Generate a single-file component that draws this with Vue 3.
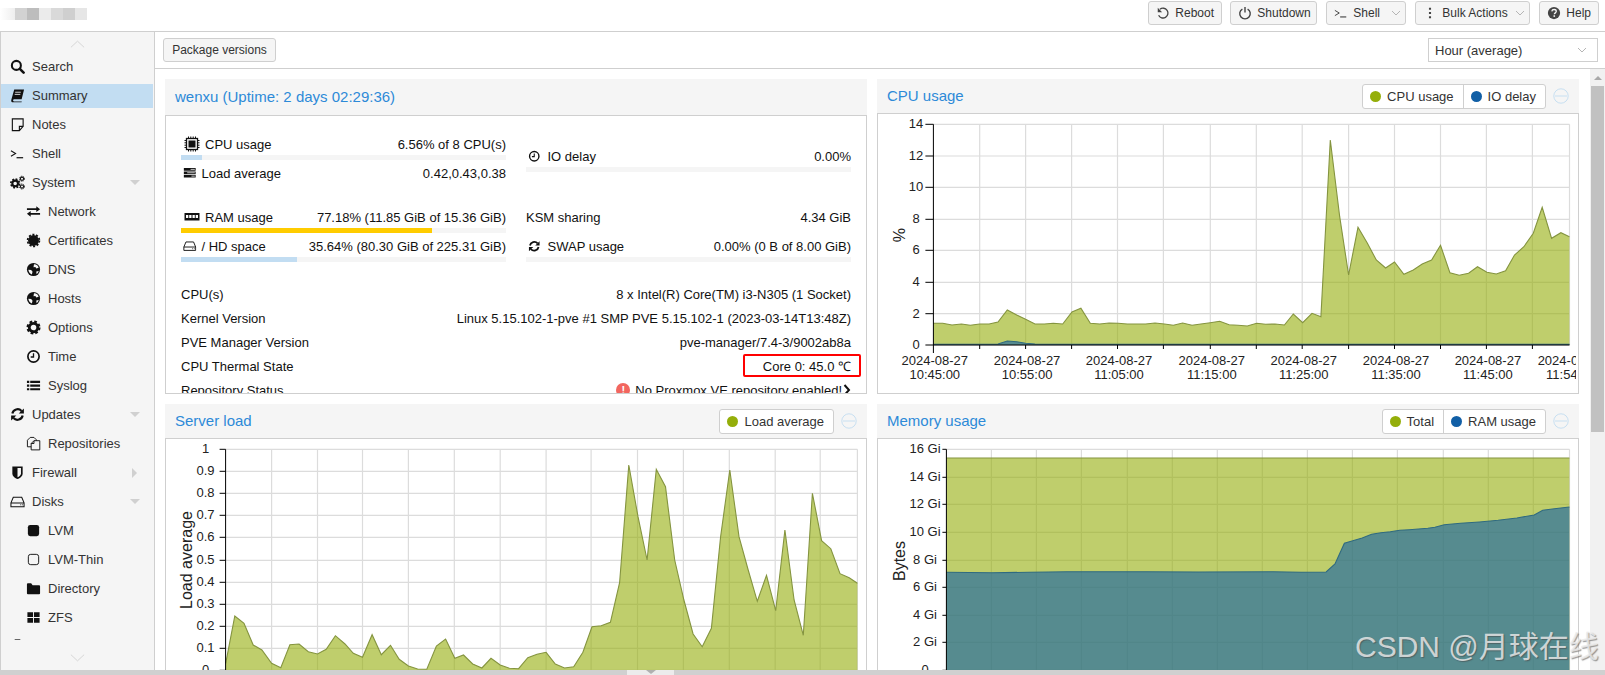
<script setup>
const toPts = (raw, ox, oy, fx, fy) => {
  const out = []
  for (let i = 0; i < raw.length; i += 2) out.push([+(ox + raw[i] / fx).toFixed(1), +(oy + raw[i + 1] / fy).toFixed(1)])
  return out
}
const cpuRaw = [135,640,155,640,175,645,195,642,214,646,234,642,254,642,273,636,293,600,313,615,332,628,352,642,372,642,391,640,411,642,431,606,450,595,470,640,490,642,510,639,529,640,549,642,569,642,588,642,608,639,628,642,647,646,667,639,687,646,706,642,726,638,746,634,766,644,785,646,805,648,825,640,844,643,864,642,884,645,903,612,923,638,943,610,962,620,982,90,1002,320,1021,495,1041,352,1061,400,1080,450,1100,474,1119,456,1139,493,1159,480,1178,462,1198,450,1217,406,1237,488,1257,496,1277,490,1296,470,1316,487,1336,492,1356,482,1375,435,1395,410,1415,370,1434,292,1454,385,1474,368,1492,380]
const ioRaw = [135,703,273,702,293,693,313,695,332,700,352,702,372,703,1492,703]
const loadRaw = [143,790,163,648,183,670,203,735,222,750,243,790,263,803,283,734,303,732,323,755,343,762,362,748,382,707,403,732,421,760,441,772,462,704,482,764,502,736,521,778,541,798,561,807,581,808,602,738,622,717,642,775,661,765,681,792,701,804,721,775,741,795,761,805,781,806,801,773,821,763,841,757,861,792,881,804,901,800,921,757,941,680,961,677,981,667,1001,548,1021,195,1041,350,1061,480,1081,208,1101,260,1121,480,1141,600,1161,702,1181,740,1201,685,1221,410,1241,210,1261,410,1281,510,1301,604,1321,526,1341,632,1361,390,1381,600,1401,706,1421,280,1441,422,1461,446,1481,521,1501,533,1519,550]
const totalRaw = [163,174,1492,174]
const ramRaw = [163,517,260,518,340,517,420,515,590,515,700,516,860,515,920,517,973,516,992,492,1012,430,1030,422,1050,414,1070,403,1090,398,1110,395,1130,391,1150,389,1170,387,1190,385,1205,382,1225,374,1260,370,1300,366,1340,361,1380,354,1417,345,1435,331,1460,326,1492,321]

const line = (pts) => pts.map((p) => p.join(',')).join(' ')
const area = (pts, base) => `${pts[0][0]},${base} ${line(pts)} ${pts[pts.length - 1][0]},${base}`

const fx = 2.1333
const green = '#94ae0a'
const blue = '#115fa6'

const cpuX = [234,332,430,528,626,726,824,922,1021,1119,1217,1315,1413].map((v) => +(870 + v / fx - 878).toFixed(1))
const cpuLabels = [
  [135, '10:45:00'], [332, '10:55:00'], [528, '11:05:00'], [726, '11:15:00'],
  [922, '11:25:00'], [1119, '11:35:00'], [1315, '11:45:00'], [1492, '11:54:00']
].map(([x, t]) => ({ x: +(870 + x / fx - 878 + 1.5).toFixed(1), t }))

const charts = [
  {
    title: 'CPU usage', legend: [['CPU usage', green], ['IO delay', blue]], axis: 'Cpu',
    left: 55.4, right: 691.5, top: 10.3, base: 231, labelX: 38, tickLen: 8,
    yLabel: '%', yLabelX: 27, yLabelY: 121,
    ticks: [['14', 43], ['12', 138], ['10', 232], ['8', 328], ['6', 421], ['4', 517], ['2', 611], ['0', 705]].map(([t, y]) => ({ t, y: +(110 + y / 3 - 114).toFixed(1) })),
    xs: cpuX, xLabels: cpuLabels,
    series: [
      { c: green, pts: toPts(cpuRaw, 870 - 878, 110 - 114, fx, 3) },
      { c: blue, pts: toPts(ioRaw, 870 - 878, 110 - 114, fx, 3) }
    ]
  },
  {
    title: 'Server load', legend: [['Load average', green]], axis: 'Load',
    left: 59.6, right: 691.4, top: 10.3, base: 231, labelX: 39.5, tickLen: 6,
    yLabel: 'Load average', yLabelX: 26, yLabelY: 121,
    ticks: [['1', 148], ['0.9', 214], ['0.8', 280], ['0.7', 346], ['0.6', 412], ['0.5', 481], ['0.4', 547], ['0.3', 613], ['0.2', 679], ['0.1', 745], ['0', 811]].map(([t, y]) => ({ t, y: +(400 + y / 3 - 439).toFixed(1) })),
    xs: [243,343,441,541,641,741,841,939,1040,1140,1240,1340,1438].map((v) => +(160 + v / 2.178 - 166).toFixed(1)),
    xLabels: [],
    series: [{ c: green, pts: toPts(loadRaw, 160 - 166, 400 - 439, 2.178, 3) }]
  },
  {
    title: 'Memory usage', legend: [['Total', green], ['RAM usage', blue]], axis: 'Mem',
    left: 68.4, right: 691.5, top: 10.3, base: 231, labelX: 47, tickLen: 4,
    yLabel: 'Bytes', yLabelX: 27, yLabelY: 122,
    ticks: [['16 Gi', 148], ['14 Gi', 232], ['12 Gi', 313], ['10 Gi', 397], ['8 Gi', 481], ['6 Gi', 562], ['4 Gi', 646], ['2 Gi', 727], ['0', 811]].map(([t, y]) => ({ t, y: +(400 + y / 3 - 439).toFixed(1) })),
    xs: [259,355,451,549,645,741,837,933,1029,1125,1223,1319,1415].map((v) => +(870 + v / fx - 878).toFixed(1)),
    xLabels: [],
    series: [
      { c: green, pts: toPts(totalRaw, 870 - 878, 400 - 439, fx, 3) },
      { c: blue, pts: toPts(ramRaw, 870 - 878, 400 - 439, fx, 3) }
    ]
  }
].map((c) => ({
  ...c,
  series: c.series.map((s) => ({ ...s, line: line(s.pts), area: area(s.pts, c.axis === 'Cpu' ? c.base : 240) }))
}))

const nav = [
  ['i-search', 'Search', 0], ['i-book', 'Summary', 0, 'active'], ['i-note', 'Notes', 0], ['i-shell', 'Shell', 0],
  ['i-cogs', 'System', 0, 'down'], ['i-exchange', 'Network', 1], ['i-cert', 'Certificates', 1], ['i-globe', 'DNS', 1],
  ['i-globe', 'Hosts', 1], ['i-gear', 'Options', 1], ['i-clock', 'Time', 1], ['i-list', 'Syslog', 1],
  ['i-refresh', 'Updates', 0, 'down'], ['i-files', 'Repositories', 1], ['i-shield', 'Firewall', 0, 'right'],
  ['i-hdd', 'Disks', 0, 'down'], ['i-solid', 'LVM', 1], ['i-outline', 'LVM-Thin', 1], ['i-folder', 'Directory', 1],
  ['i-th', 'ZFS', 1], ['i-ceph', 'Ceph', 0]
].map(([icon, label, child, flag]) => ({ icon, label, child, active: flag === 'active', caret: flag === 'down' || flag === 'right' ? flag : '' }))

const info = [
  ['CPU(s)', '8 x Intel(R) Core(TM) i3-N305 (1 Socket)'],
  ['Kernel Version', 'Linux 5.15.102-1-pve #1 SMP PVE 5.15.102-1 (2023-03-14T13:48Z)'],
  ['PVE Manager Version', 'pve-manager/7.4-3/9002ab8a']
]
const fillWidth = (p) => ({ width: p + '%' })
</script>

<template>
  <div class="app">
    <svg class="defs" aria-hidden="true">
      <symbol id="i-search" viewBox="0 0 16 16"><circle cx="6.8" cy="6.8" r="4.8" fill="none" stroke="currentColor" stroke-width="2.2"/><path d="M10.5 10.5l4 4" stroke="currentColor" stroke-width="2.8" stroke-linecap="round"/></symbol>
      <symbol id="i-book" viewBox="0 0 16 16"><path d="M4.5 1.5H15l-2.6 10.6H4a1.3 1.3 0 0 0 0 2.2h8.6l-.3 1H3.2C1.6 15.3 1 14 1.4 12.4z" fill="currentColor"/><path d="M5.5 4.5h6M5 6.8h6" stroke="#f5f5f5" stroke-width=".9"/></symbol>
      <symbol id="i-note" viewBox="0 0 16 16"><path d="M2.5 2H14v8l-4 4.5H2.5z" fill="none" stroke="currentColor" stroke-width="1.2"/><path d="M10 14.5V10h4" fill="none" stroke="currentColor" stroke-width="1.2"/></symbol>
      <symbol id="i-shell" viewBox="0 0 16 16"><path d="M1 5l5 3-5 3" fill="none" stroke="currentColor" stroke-width="1.1"/><path d="M7 12.5h7" stroke="currentColor" stroke-width="1.3"/></symbol>
      <symbol id="i-gear" viewBox="0 0 16 16"><circle cx="8" cy="8" r="4.5" fill="none" stroke="currentColor" stroke-width="3"/><circle cx="8" cy="8" r="6.3" fill="none" stroke="currentColor" stroke-width="2.4" stroke-dasharray="2.8 2.15"/></symbol>
      <symbol id="i-cogs" viewBox="0 0 16 16"><circle cx="5.5" cy="9" r="3" fill="none" stroke="currentColor" stroke-width="2.2"/><circle cx="5.5" cy="9" r="4.6" fill="none" stroke="currentColor" stroke-width="1.8" stroke-dasharray="2 1.6"/><circle cx="12.8" cy="4" r="1.7" fill="none" stroke="currentColor" stroke-width="1.2"/><circle cx="12.8" cy="4" r="2.7" fill="none" stroke="currentColor" stroke-width="1" stroke-dasharray="1.2 1"/><circle cx="12.8" cy="12.3" r="1.7" fill="none" stroke="currentColor" stroke-width="1.2"/><circle cx="12.8" cy="12.3" r="2.7" fill="none" stroke="currentColor" stroke-width="1" stroke-dasharray="1.2 1"/></symbol>
      <symbol id="i-exchange" viewBox="0 0 16 16"><path d="M1 4.5h10v-2l4 3-4 3v-2H1zM15 9.5H5v-2l-4 3 4 3v-2h10z" fill="currentColor"/></symbol>
      <symbol id="i-cert" viewBox="0 0 16 16"><circle cx="8" cy="8" r="5.8" fill="currentColor"/><circle cx="8" cy="8" r="6.3" fill="none" stroke="currentColor" stroke-width="1.8" stroke-dasharray="2.2 1.76"/></symbol>
      <symbol id="i-globe" viewBox="0 0 16 16"><circle cx="8" cy="8" r="7" fill="currentColor"/><path d="M8.5 2.500c2.500-.3 4.500 1.500 5 3.500l-2.500.8-1-1.500-2 .3zM2.500 8.200l3 .2 1.500 2-.8 3c-1.800-.8-3.500-3-3.700-5.200zM11 10l2.500-.5c-.3 1.300-1 2.500-2.300 3.300z" fill="#f5f5f5"/></symbol>
      <symbol id="i-clock" viewBox="0 0 16 16"><circle cx="8" cy="8" r="6" fill="none" stroke="currentColor" stroke-width="1.8"/><path d="M8 4.500V8.500H5" fill="none" stroke="currentColor" stroke-width="1.4"/></symbol>
      <symbol id="i-list" viewBox="0 0 16 16"><path d="M1 3h2.500v2.300H1zM1 6.900h2.500v2.300H1zM1 10.800h2.500v2.300H1zM4.500 3H15v2.300H4.500zM4.500 6.900H15v2.300H4.500zM4.500 10.800H15v2.300H4.500z" fill="currentColor"/></symbol>
      <symbol id="i-refresh" viewBox="0 0 16 16"><path d="M2.500 7A5.700 5.700 0 0 1 12.300 4.200" fill="none" stroke="currentColor" stroke-width="2.3"/><path d="M14.800 1.500V7H9.300z" fill="currentColor"/><path d="M13.500 9A5.700 5.700 0 0 1 3.700 11.800" fill="none" stroke="currentColor" stroke-width="2.3"/><path d="M1.200 14.500V9h5.500z" fill="currentColor"/></symbol>
      <symbol id="i-files" viewBox="0 0 16 16"><path d="M4.500 1.500h4L11 4v1M4.500 1.500l-3 3v7h4" fill="none" stroke="currentColor" stroke-width="1"/><path d="M8.500 5h6.200v9.800H5.500V8z" fill="none" stroke="currentColor" stroke-width="1"/><path d="M8.500 5v3h-3" fill="none" stroke="currentColor" stroke-width="1"/></symbol>
      <symbol id="i-shield" viewBox="0 0 16 16"><path d="M2.500 1.500h11V9c0 3-3 5-5.500 6-2.500-1-5.500-3-5.500-6z" fill="currentColor"/><path d="M8 3.300h3.700V9c0 1.800-2 3.300-3.700 4.100z" fill="#f5f5f5"/></symbol>
      <symbol id="i-hdd" viewBox="0 0 16 16"><path d="M1 9.500l2.500-6h9l2.500 6v4H1zM1 9.500h14" fill="none" stroke="currentColor" stroke-width="1.1"/><path d="M11 11.500h1M13 11.500h.8" stroke="currentColor" stroke-width="1"/></symbol>
      <symbol id="i-solid" viewBox="0 0 16 16"><rect x="2" y="2" width="12" height="12" rx="2.500" fill="currentColor"/></symbol>
      <symbol id="i-outline" viewBox="0 0 16 16"><rect x="2.500" y="2.500" width="11" height="11" rx="2.500" fill="none" stroke="currentColor" stroke-width="1"/></symbol>
      <symbol id="i-folder" viewBox="0 0 16 16"><path d="M1 3.500a1 1 0 0 1 1-1h3.500L7 4.500h7a1 1 0 0 1 1 1V13a1 1 0 0 1-1 1H2a1 1 0 0 1-1-1z" fill="currentColor"/></symbol>
      <symbol id="i-th" viewBox="0 0 16 16"><path d="M1.500 2.500h6v5h-6zM8.500 2.500h6v5h-6zM1.500 8.500h6v5h-6zM8.500 8.500h6v5h-6z" fill="currentColor"/></symbol>
      <symbol id="i-ceph" viewBox="0 0 16 16"><path d="M5 1h6" stroke="currentColor" stroke-width="1.2"/></symbol>
      <symbol id="i-cpu" viewBox="0 0 16 16"><rect x="2.500" y="2.500" width="11" height="11" fill="#fff" stroke="currentColor" stroke-width="1.3"/><rect x="4.500" y="4.500" width="7" height="7" fill="currentColor"/><path d="M4.500 .5v2M6.800 .5v2M9.200 .5v2M11.500 .5v2M4.500 13.500v2M6.800 13.500v2M9.200 13.500v2M11.500 13.500v2M.5 4.500h2M.5 6.800h2M.5 9.200h2M.5 11.500h2M13.500 4.500h2M13.500 6.800h2M13.500 9.200h2M13.500 11.500h2" stroke="currentColor" stroke-width="1"/></symbol>
      <symbol id="i-load" viewBox="0 0 16 16"><path d="M1 2.500h14v3H1zM1 6.500h14v3H1zM1 10.500h14v3H1z" fill="currentColor"/><path d="M9 4h5M5 8h9M10 12h4" stroke="#fff" stroke-width=".9"/></symbol>
      <symbol id="i-ram" viewBox="0 0 16 16"><path d="M.5 4h15v7.500H.5z" fill="currentColor"/><path d="M2 6h2.300v3H2zM5.200 6h2.300v3H5.200zM8.500 6h2.300v3H8.500zM11.700 6H14v3h-2.300z" fill="#fff"/></symbol>
      <symbol id="i-undo" viewBox="0 0 16 16"><path d="M4.500 3.800A5.600 5.600 0 1 1 3 10.500" fill="none" stroke="currentColor" stroke-width="1.5"/><path d="M2 2v5h5z" fill="currentColor"/></symbol>
      <symbol id="i-power" viewBox="0 0 16 16"><path d="M5 3.500a6 6 0 1 0 6 0" fill="none" stroke="currentColor" stroke-width="1.6"/><path d="M8 1v6.500" stroke="currentColor" stroke-width="1.6"/></symbol>
      <symbol id="i-dots" viewBox="0 0 16 16"><path d="M6.800 2h2.400v2.400H6.800zM6.800 6.800h2.400v2.400H6.800zM6.800 11.600h2.400V14H6.800z" fill="currentColor"/></symbol>
      <symbol id="i-help" viewBox="0 0 16 16"><circle cx="8" cy="8" r="7" fill="currentColor"/><path d="M5.500 6.200C5.700 4.700 6.800 4 8.100 4c1.400 0 2.500.9 2.500 2.100 0 1.700-2.200 1.800-2.200 3.400" fill="none" stroke="#f5f5f5" stroke-width="1.5"/><path d="M7.400 10.600h1.800v1.800H7.400z" fill="#f5f5f5"/></symbol>
    </svg>

    <header class="top">
      <div class="logo"><i class="b0"></i><i class="b1"></i><i class="b2"></i><i class="b3"></i><i class="b4"></i><i class="b5"></i><i class="b6"></i></div>
      <div class="top-actions">
        <button class="btn btn-reboot"><svg class="ic"><use href="#i-undo"/></svg>Reboot</button>
        <button class="btn btn-shut"><svg class="ic"><use href="#i-power"/></svg>Shutdown</button>
        <button class="btn btn-shell"><svg class="ic"><use href="#i-shell"/></svg>Shell<span class="split"></span><svg class="chev" viewBox="0 0 10 6"><path d="M1 1l4 4 4-4"/></svg></button>
        <button class="btn btn-bulk"><svg class="ic"><use href="#i-dots"/></svg>Bulk Actions<svg class="chev" viewBox="0 0 10 6"><path d="M1 1l4 4 4-4"/></svg></button>
        <button class="btn"><svg class="ic"><use href="#i-help"/></svg>Help</button>
      </div>
    </header>

    <div class="middle">
      <aside class="side">
        <div class="scroll-up"><svg viewBox="0 0 16 8"><path d="M1 7.500L8 1l7 6.500"/></svg></div>
        <nav class="nav">
          <div v-for="n in nav" :key="n.label" class="nav-row" :class="{ active: n.active, child: n.child }">
            <svg class="nav-ic"><use :href="'#' + n.icon"/></svg>
            <span>{{ n.label }}</span>
            <i v-if="n.caret" class="caret" :class="n.caret"></i>
          </div>
        </nav>
        <div class="scroll-down"><svg viewBox="0 0 16 8"><path d="M1 .5L8 7l7-6.500"/></svg></div>
      </aside>

      <main class="main">
        <div class="toolbar">
          <button class="btn btn-pkg">Package versions</button>
          <div class="select"><span>Hour (average)</span><svg class="chev" viewBox="0 0 10 6"><path d="M1 1l4 4 4-4"/></svg></div>
        </div>
        <div class="content">
          <div class="grid">
            <section class="panel">
              <div class="phead phead-tall"><h2>wenxu (Uptime: 2 days 02:29:36)</h2></div>
              <div class="pbody summary">
                <div class="cols">
                  <div class="col">
                    <div class="stat"><div class="stat-line"><span class="lab"><svg class="sic"><use href="#i-cpu"/></svg>CPU usage</span><span>6.56% of 8 CPU(s)</span></div><div class="bar"><div class="fill" :style="fillWidth(6.56)"></div></div></div>
                    <div class="stat"><div class="stat-line"><span class="lab small"><svg class="sic"><use href="#i-load"/></svg>Load average</span><span>0.42,0.43,0.38</span></div></div>
                    <div class="stat gap15"><div class="stat-line"><span class="lab"><svg class="sic"><use href="#i-ram"/></svg>RAM usage</span><span>77.18% (11.85 GiB of 15.36 GiB)</span></div><div class="bar"><div class="fill warn" :style="fillWidth(77.18)"></div></div></div>
                    <div class="stat"><div class="stat-line"><span class="lab small"><svg class="sic"><use href="#i-hdd"/></svg>/ HD space</span><span>35.64% (80.30 GiB of 225.31 GiB)</span></div><div class="bar"><div class="fill" :style="fillWidth(35.64)"></div></div></div>
                  </div>
                  <div class="col col-r">
                    <div class="stat"><div class="stat-line"><span class="lab mini"><svg class="sic"><use href="#i-clock"/></svg>IO delay</span><span>0.00%</span></div><div class="bar"></div></div>
                    <div class="stat gap32"><div class="stat-line"><span>KSM sharing</span><span>4.34 GiB</span></div></div>
                    <div class="stat"><div class="stat-line"><span class="lab mini"><svg class="sic"><use href="#i-refresh"/></svg>SWAP usage</span><span>0.00% (0 B of 8.00 GiB)</span></div><div class="bar"></div></div>
                  </div>
                </div>
                <div class="info">
                  <div v-for="r in info" :key="r[0]" class="info-row"><span>{{ r[0] }}</span><span>{{ r[1] }}</span></div>
                  <div class="info-row thermal"><span>CPU Thermal State</span><span>Core 0: 45.0 ℃</span><i class="mark"></i></div>
                  <div class="info-row"><span>Repository Status</span><span class="repo"><i class="err">!</i>No Proxmox VE repository enabled!<svg class="more" viewBox="0 0 8 12"><path d="M1.500 1l4.500 5-4.500 5"/></svg></span></div>
                </div>
              </div>
            </section>

            <section v-for="c in charts" :key="c.title" class="panel">
              <div class="phead">
                <h2>{{ c.title }}</h2>
                <div class="legend"><div v-for="l in c.legend" :key="l[0]" class="leg"><i :style="{ background: l[1] }"></i>{{ l[0] }}</div></div>
                <div class="tool"><svg viewBox="0 0 16 16"><circle cx="8" cy="8" r="7.2"/><path d="M2 8h12"/></svg></div>
              </div>
              <div class="pbody">
                <svg class="chart" width="698" height="300">
                  <g class="grid-lines">
                    <line v-for="t in c.ticks" :key="'h' + t.t" :x1="c.left" :x2="c.right" :y1="t.y" :y2="t.y"/>
                    <line v-for="x in c.xs" :key="'v' + x" :x1="x" :x2="x" :y1="c.top" :y2="c.base"/>
                    <line :x1="c.right" :x2="c.right" :y1="c.top" :y2="c.base"/>
                  </g>
                  <g v-for="s in c.series" :key="s.c">
                    <polygon :points="s.area" :fill="s.c" fill-opacity=".6"/>
                    <polyline :points="s.line" fill="none" :stroke="s.c === '#94ae0a' ? '#84943f' : '#2f6a80'" stroke-width="1.1"/>
                  </g>
                  <g class="axis">
                    <line :x1="c.left" :x2="c.left" :y1="c.top" :y2="c.base + 8"/>
                    <line v-for="t in c.ticks" :key="'t' + t.t" :x1="c.left - c.tickLen" :x2="c.left" :y1="t.y" :y2="t.y"/>
                    <template v-if="c.xLabels.length">
                      <line :x1="c.left" :x2="c.right" :y1="c.base" :y2="c.base"/>
                      <line v-for="x in c.xs" :key="'x' + x" :x1="x" :x2="x" :y1="c.base" :y2="c.base + 4"/>
                    </template>
                  </g>
                  <text v-for="t in c.ticks" :key="'l' + t.t" class="tk" :x="c.labelX" :y="t.y + 4" text-anchor="middle">{{ t.t }}</text>
                  <text class="yt" :x="c.yLabelX" :y="c.yLabelY" text-anchor="middle" :transform="`rotate(-90 ${c.yLabelX} ${c.yLabelY})`">{{ c.yLabel }}</text>
                  <g v-for="l in c.xLabels" :key="l.t">
                    <text class="tk" :x="l.x" :y="251" text-anchor="middle">2024-08-27</text>
                    <text class="tk" :x="l.x" :y="265" text-anchor="middle">{{ l.t }}</text>
                  </g>
                </svg>
              </div>
            </section>
          </div>
          <div class="sbar">
            <div class="sbar-up"><i></i></div>
            <div class="thumb"></div>
          </div>
        </div>
      </main>
    </div>

    <div class="bottom"><div class="handle"><i></i></div></div>
    <div class="watermark">CSDN @月球在线</div>
  </div>
</template>

<style>
html, body { margin: 0; background: #fff; overflow: hidden; }
</style>

<style scoped>
.app { position: relative; width: 1605px; height: 675px; overflow: hidden; display: flex; flex-direction: column; font-family: "Liberation Sans", Arial, sans-serif; font-size: 13px; color: #222; background: #fff; }
.defs { display: block; width: 0; height: 0; }
.top { flex: 0 0 32px; box-sizing: border-box; border-bottom: 1px solid #cfcfcf; display: flex; justify-content: space-between; align-items: flex-start; }
.logo { display: flex; margin-top: 8px; height: 12px; }
.logo i { display: block; height: 12px; width: 12px; }
.logo .b0 { width: 15px; background: linear-gradient(90deg, #fff, #eee); }
.logo .b1 { background: #d2d2d2; } .logo .b2 { background: #bdbdbd; } .logo .b3 { background: #ebebeb; } .logo .b4 { background: #d9d9d9; } .logo .b5 { background: #cfcfcf; } .logo .b6 { background: #e6e6e6; }
.top-actions { display: flex; gap: 9px; padding: 1px 6px 0 0; }
.btn { box-sizing: border-box; height: 24px; padding: 0 7px; display: flex; align-items: center; gap: 5px; background: #f5f5f5; border: 1px solid #cfcfcf; border-radius: 3px; font: 12px "Liberation Sans", Arial, sans-serif; color: #333; white-space: nowrap; }
.ic { width: 14px; height: 14px; flex: none; color: #444; }
.chev { width: 10px; height: 6px; flex: none; }
.chev path { fill: none; stroke: #b5b5b5; stroke-width: 1; }
.btn-reboot { width: 74px; margin-right: -1px; }
.btn-shut { width: 87px; }
.btn-shell { width: 80px; }
.split { width: 1px; height: 16px; background: #ccc; margin-left: 1px; }
.btn-bulk { width: 115px; }
.btn-bulk .chev { margin-left: 2px; }
.btn-pkg { width: 113px; justify-content: center; }

.middle { flex: 0 0 638px; display: flex; overflow: hidden; }
.side { flex: 0 0 155px; box-sizing: border-box; border-left: 1px solid #cfcfcf; border-right: 1px solid #cfcfcf; background: #f5f5f5; display: flex; flex-direction: column; }
.scroll-up { flex: 0 0 20px; display: flex; justify-content: center; align-items: flex-start; padding-top: 8px; box-sizing: border-box; }
.scroll-up svg, .scroll-down svg { width: 15px; height: 8px; }
.scroll-up path, .scroll-down path { fill: none; stroke: #d4d4d4; stroke-width: 1; }
.nav { flex: 0 0 588px; overflow: hidden; display: flex; flex-direction: column; }
.nav-row { position: relative; flex: none; box-sizing: border-box; height: 24px; margin: 3px 1px 2px 0; padding: 0 0 2px 9px; display: flex; align-items: center; color: #333; font-size: 13px; }
.nav-row.child { padding-left: 25px; }
.nav-row.active { background: #c2ddf2; }
.nav-ic { width: 15px; height: 15px; margin-right: 7px; color: #111; flex: none; }
.caret { position: absolute; left: 129px; top: 9px; width: 0; height: 0; }
.caret.down { border-left: 5px solid transparent; border-right: 5px solid transparent; border-top: 5px solid #d0d0d0; }
.caret.right { left: 131px; top: 7px; border-top: 5px solid transparent; border-bottom: 5px solid transparent; border-left: 5px solid #d0d0d0; }
.scroll-down { flex: 0 0 30px; display: flex; justify-content: center; align-items: flex-start; padding-top: 14px; box-sizing: border-box; }

.main { flex: 1; min-width: 0; display: flex; flex-direction: column; }
.toolbar { flex: 0 0 37px; box-sizing: border-box; border-bottom: 1px solid #cfcfcf; padding: 6px 7px 0 8px; display: flex; justify-content: space-between; align-items: flex-start; }
.select { box-sizing: border-box; width: 170px; height: 24px; border: 1px solid #cfcfcf; padding: 0 10px 0 6px; display: flex; justify-content: space-between; align-items: center; font-size: 13px; color: #333; }
.content { flex: 1; min-height: 0; display: flex; overflow: hidden; }
.grid { flex: 1; min-width: 0; display: grid; grid-template-columns: 702px 702px; column-gap: 10px; row-gap: 10px; grid-auto-rows: 315px; padding: 10px 0 0 10px; box-sizing: border-box; }
.panel { display: flex; flex-direction: column; min-height: 0; }
.phead { flex: 0 0 34px; background: #f5f5f5; display: flex; align-items: center; padding: 0 10px; box-sizing: border-box; }
.phead-tall { flex-basis: 36px; }
.phead h2 { margin: -2px 0 0; flex: 1; font-size: 15px; font-weight: 400; color: #2d8ad8; }
.legend { display: flex; background: #fff; border: 1px solid #cfcfcf; border-radius: 3px; height: 25px; box-sizing: border-box; }
.leg { display: flex; align-items: center; gap: 6px; padding: 0 9px 0 7px; font-size: 13px; color: #333; }
.leg + .leg { border-left: 1px solid #cfcfcf; }
.leg i { width: 11px; height: 11px; border-radius: 50%; }
.tool { width: 16px; height: 16px; margin-left: 7px; }
.tool svg { display: block; width: 16px; height: 16px; }
.tool circle, .tool path { fill: none; stroke: #c7dff1; stroke-width: 1; }
.pbody { flex: 1; min-height: 0; border: 1px solid #cfcfcf; background: #fff; overflow: hidden; }
.chart { display: block; }
.grid-lines line { stroke: #dcdcdc; stroke-width: 1.2; }
.axis line { stroke: #000; stroke-width: 1; }
.tk { font: 13px "Liberation Sans", Arial, sans-serif; fill: #222; }
.yt { font: 16px "Liberation Sans", Arial, sans-serif; fill: #222; }

.summary { padding: 19px 15px 0; color: #111; font-size: 13px; }
.cols { display: grid; grid-template-columns: 325px 325px; column-gap: 20px; }
.col-r { padding-top: 12px; }
.stat { height: 29px; }
.gap15 { margin-top: 15px; }
.gap32 { margin-top: 32px; }
.stat-line { height: 18px; display: flex; justify-content: space-between; align-items: center; white-space: nowrap; }
.lab { display: flex; align-items: center; gap: 5px; padding-left: 3px; }
.lab.small { padding-left: 2px; }
.lab.small .sic { width: 13.5px; height: 13.5px; }
.lab.mini { padding-left: 2px; gap: 7px; }
.lab.mini .sic { width: 12.5px; height: 12.5px; }
.sic { width: 16px; height: 16px; flex: none; color: #111; }
.bar { height: 5px; margin-top: 2px; background: #f5f5f5; }
.fill { height: 5px; background: #c2ddf2; }
.fill.warn { background: #ffcc00; }
.info { margin-top: 16px; }
.info-row { position: relative; height: 24px; display: flex; justify-content: space-between; align-items: center; white-space: nowrap; }
.mark { position: absolute; right: -10px; top: 0; width: 118px; height: 23px; box-sizing: border-box; border: 2.5px solid #f00; border-radius: 2px; }
.repo { display: flex; align-items: center; }
.err { width: 14px; height: 14px; margin-right: 5px; border-radius: 50%; background: #f2665f; color: #fff; font: 700 11px/14px "Liberation Sans", Arial, sans-serif; text-align: center; }
.more { width: 8px; height: 12px; margin-left: 1px; }
.more path { fill: none; stroke: #111; stroke-width: 2; }

.sbar { flex: 0 0 15px; background: #f1f1f1; display: flex; flex-direction: column; align-items: center; }
.sbar-up { flex: 0 0 17px; display: flex; justify-content: center; align-items: center; }
.sbar-up i { width: 0; height: 0; border-left: 4px solid transparent; border-right: 4px solid transparent; border-bottom: 4px solid #a8a8a8; }
.thumb { width: 13px; height: 346px; background: #c1c1c1; }

.bottom { flex: 0 0 5px; background: #d0d0d0; display: flex; }
.handle { width: 47px; height: 5px; margin-left: 627px; background: #ececec; display: flex; justify-content: center; }
.handle i { width: 0; height: 0; border-left: 5px solid transparent; border-right: 5px solid transparent; border-top: 4px solid #b0b0b0; }
.watermark { position: absolute; left: 1355px; top: 627px; font: 30px/40px "Liberation Sans", "Noto Sans CJK SC", sans-serif; white-space: nowrap; color: rgba(235, 235, 235, .82); text-shadow: 1px 1px 1px rgba(70, 70, 70, .55); }
</style>
